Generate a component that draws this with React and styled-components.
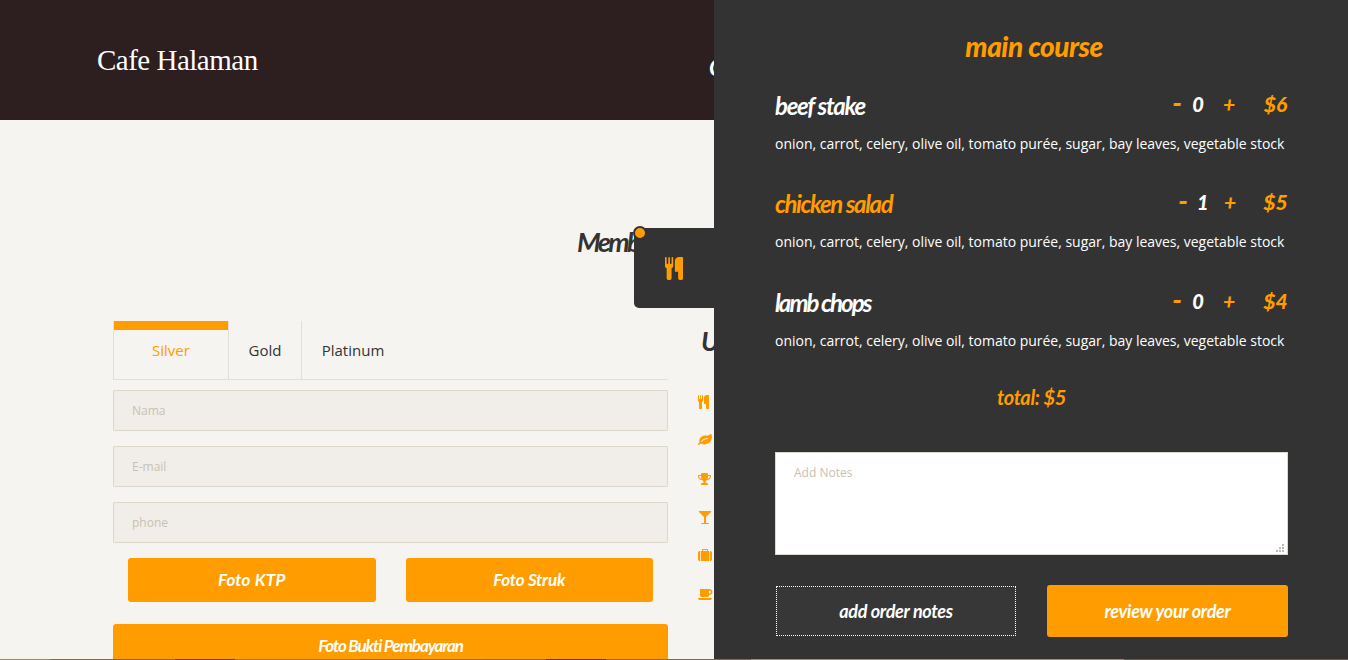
import React from "react";
import styled, { createGlobalStyle } from "styled-components";

const orange = "#ff9d00";
const charcoal = "#333333";

const GlobalStyle = createGlobalStyle`
  * { box-sizing: border-box; }
  html, body { margin: 0; padding: 0; }
  body { width: 1348px; height: 660px; overflow: hidden; font-family: "Open Sans", sans-serif; }
`;

const Page = styled.div`
  position: relative;
  width: 1348px;
  height: 660px;
  overflow: hidden;
  background: #f6f4f0;
  color: ${charcoal};
`;

const Header = styled.header`
  display: flex;
  justify-content: space-between;
  width: 739px;
  height: 120px;
  padding-left: 97px;
  background: #2d1e20;
  color: #fff;
`;

const Script = styled.span`
  display: block;
  font-family: Lato, sans-serif;
  font-style: italic;
  font-weight: ${(p) => p.$weight || 700};
  font-size: ${(p) => p.$size}px;
  letter-spacing: ${(p) => p.$spacing || 0}px;
  line-height: ${(p) => p.$line || 30}px;
  color: ${(p) => p.$color || "inherit"};
  white-space: nowrap;
`;

const Logo = styled.div`
  font-family: "Liberation Serif", serif;
  font-size: 29px;
  line-height: 36px;
  letter-spacing: -0.5px;
  padding-top: 42px;
`;

const NavItem = styled(Script)`
  width: 30px;
  padding-top: 52px;
`;

const Heading = styled.div`
  height: 201px;
  padding: 107px 0 0 577px;
`;

const Columns = styled.main`
  display: flex;
  gap: 30px;
  padding-left: 113px;
`;

const FormColumn = styled.section`
  width: 555px;
`;

const Tabs = styled.div`
  display: flex;
  height: 59px;
  margin-bottom: 10px;
  border-left: 1px solid #dfdfdf;
  border-bottom: 1px solid #dfdfdf;
`;

const Tab = styled.div`
  width: ${(p) => p.$width}px;
  border-right: ${(p) => (p.$last ? 0 : 1)}px solid #dfdfdf;
  color: ${(p) => (p.$active ? orange : charcoal)};
  font-size: 15px;
  line-height: 41px;
  text-align: center;
  &::before {
    content: "";
    display: block;
    height: 9px;
    background: ${(p) => (p.$active ? orange : "transparent")};
  }
`;

const Input = styled.input`
  display: block;
  width: 100%;
  height: 41px;
  margin: 0 0 15px;
  padding: 0 18px;
  border: 1px solid #ded7cb;
  border-radius: 1px;
  background: #f1eee9;
  font: 12px "Open Sans", sans-serif;
  &::placeholder { color: #c8c1b1; opacity: 1; }
`;

const PhotoRow = styled.div`
  display: flex;
  gap: 30px;
  padding: 0 15px;
  margin-bottom: 22px;
`;

const Button = styled.button`
  flex: 1;
  width: 100%;
  height: ${(p) => p.$height || 44}px;
  padding: 0;
  border: 0;
  border-radius: 3px;
  background: ${orange};
  color: #fff;
  display: flex;
  align-items: center;
  justify-content: center;
`;

const Perks = styled.section`
  display: flex;
  flex-direction: column;
  width: 40px;
  color: ${orange};
`;

const PerkTitle = styled(Script)`
  padding: 5px 0 0 3px;
  height: 62px;
`;

const Perk = styled.div`
  display: flex;
  align-items: center;
  height: 38.3px;
`;

const Drawer = styled.aside`
  position: absolute;
  top: 0;
  right: 0;
  width: 634px;
  height: 660px;
  padding: 27px 60px 0 61px;
  background: ${charcoal};
  color: #fff;
`;

const Handle = styled.div`
  position: absolute;
  left: -80px;
  top: 228px;
  width: 80px;
  height: 80px;
  display: flex;
  align-items: center;
  justify-content: center;
  border-radius: 5px 0 0 5px;
  background: ${charcoal};
  color: ${orange};
`;

const Badge = styled.i`
  position: absolute;
  left: -1px;
  top: -2px;
  width: 14px;
  height: 14px;
  border: 2px solid ${charcoal};
  border-radius: 50%;
  background: ${orange};
`;

const CourseTitle = styled.div`
  display: flex;
  justify-content: center;
  height: 41px;
  margin-bottom: 19px;
  padding-left: 5px;
`;

const Dish = styled.article`
  height: 76px;
  margin-bottom: 22.3px;
`;

const DishTop = styled.div`
  display: flex;
  justify-content: space-between;
  height: 38px;
`;

const Controls = styled.div`
  display: flex;
  height: 34px;
  color: ${orange};
`;

const Cell = styled(Script)`
  width: ${(p) => p.$width}px;
  margin-left: ${(p) => p.$gap || 0}px;
  text-align: center;
`;

const Description = styled.p`
  margin: 0;
  font-size: 14px;
  line-height: 38px;
  letter-spacing: -0.015px;
  white-space: nowrap;
`;

const Total = styled.div`
  display: flex;
  justify-content: center;
  height: 30px;
  margin: 1px 0 40px;
`;

const Notes = styled.div`
  display: flex;
  justify-content: space-between;
  height: 103px;
  padding: 11px 3px 2px 18px;
  border: 1px solid #ded7cb;
  background: #fff;
  color: #c8c1b1;
  font-size: 12px;
  line-height: 18px;
`;

const Grip = styled.svg`
  align-self: flex-end;
  width: 8px;
  height: 8px;
  fill: #bcbcbc;
`;

const Actions = styled.div`
  display: flex;
  gap: 30px;
  margin-top: 30px;
`;

const Outline = styled(Button)`
  margin: 1px 1px 1px;
  width: auto;
  flex: 0 0 240px;
  border: 1px dotted #fff;
  border-radius: 0;
  background: #373737;
`;

const BottomEdge = styled.div`
  position: absolute;
  left: 0;
  bottom: 0;
  display: flex;
  width: 100%;
  height: 1px;
`;

const Segment = styled.span`
  width: ${(p) => p.$width}px;
  background: ${(p) => p.$color};
`;

const icons = {
  cutlery: "M640 1472v-640q0 -61 -35.5 -111t-92.5 -70v-779q0 -52 -38 -90t-90 -38h-128q-52 0 -90 38t-38 90v779q-57 20 -92.5 70t-35.5 111v640q0 26 19 45t45 19t45 -19t19 -45v-416q0 -26 19 -45t45 -19t45 19t19 45v416q0 26 19 45t45 19t45 -19t19 -45v-416q0 -26 19 -45t45 -19t45 19t19 45v416q0 26 19 45t45 19t45 -19t19 -45zM1408 1472v-1600q0 -52 -38 -90t-90 -38h-128q-52 0 -90 38t-38 90v512h-224q-13 0 -22.5 9.5t-9.5 22.5v800q0 132 94 226t226 94h256q26 0 45 -19t19 -45z",
  leaf: "M1280 832q0 26 -19 45t-45 19q-172 0 -318 -49.5t-259.5 -134t-235.5 -219.5q-19 -21 -19 -45q0 -26 19 -45t45 -19q24 0 45 19q27 24 74 71t67 66q137 124 268.5 176t313.5 52q26 0 45 19t19 45zM1792 1030q0 -95 -20 -193q-46 -224 -184.5 -383t-357.5 -268q-214 -108 -438 -108q-148 0 -286 47q-15 5 -88 42t-96 37q-16 0 -39.5 -32t-45 -70t-52.5 -70t-60 -32q-43 0 -63.5 17.5t-45.5 59.5q-2 4 -6 11t-5.5 10t-3 9.5t-1.5 13.5q0 35 31 73.5t68 65.5t68 56t31 48q0 4 -14 38t-16 44q-9 51 -9 104q0 115 43.5 220t119 184.5t170.5 139t204 95.5q55 18 145 25.5t179.5 9t178.5 6t163.5 24t113.5 56.5l29.5 29.5t29.5 28t27 20t36.5 16t43.5 4.5q39 0 70.5 -46t47.5 -112t24 -124t8 -96z",
  trophy: "M458 653q-74 162 -74 371h-256v-96q0 -78 94.5 -162t235.5 -113zM1536 928v96h-256q0 -209 -74 -371q141 29 235.5 113t94.5 162zM1664 1056v-128q0 -71 -41.5 -143t-112 -130t-173 -97.5t-215.5 -44.5q-42 -54 -95 -95q-38 -34 -52.5 -72.5t-14.5 -89.5q0 -54 30.5 -91t97.5 -37q75 0 133.5 -45.5t58.5 -114.5v-64q0 -14 -9 -23t-23 -9h-832q-14 0 -23 9t-9 23v64q0 69 58.5 114.5t133.5 45.5q67 0 97.5 37t30.5 91q0 51 -14.5 89.5t-52.5 72.5q-53 41 -95 95q-113 5 -215.5 44.5t-173 97.5t-112 130t-41.5 143v128q0 40 28 68t68 28h288v96q0 66 47 113t113 47h576q66 0 113 -47t47 -113v-96h288q40 0 68 -28t28 -68z",
  glass: "M1699 1350q0 -35 -43 -78l-632 -632v-768h320q26 0 45 -19t19 -45t-19 -45t-45 -19h-896q-26 0 -45 19t-19 45t19 45t45 19h320v768l-632 632q-43 43 -43 78q0 23 18 36.5t38 17.5t43 4h1408q23 0 43 -4t38 -17.5t18 -36.5z",
  suitcase: "M640 1152h512v128h-512v-128zM288 1152v-1280h-64q-92 0 -158 66t-66 158v832q0 92 66 158t158 66h64zM1408 1152v-1280h-1024v1280h128v160q0 40 28 68t68 28h576q40 0 68 -28t28 -68v-160h128zM1792 928v-832q0 -92 -66 -158t-158 -66h-64v1280h64q92 0 158 -66t66 -158z",
  coffee: "M1664 896q0 80 -56 136t-136 56h-64v-384h64q80 0 136 56t56 136zM0 128h1792q0 -106 -75 -181t-181 -75h-1280q-106 0 -181 75t-75 181zM1856 896q0 -159 -112.5 -271.5t-271.5 -112.5h-64v-32q0 -92 -66 -158t-158 -66h-704q-92 0 -158 66t-66 158v736q0 26 19 45t45 19h1152q159 0 271.5 -112.5t112.5 -271.5z",
};

const Glyph = ({ name, size = 14, span = 1792 }) => (
  <svg width={(size * span) / 1792} height={size} viewBox={`0 -1536 ${span} 1792`} fill="currentColor">
    <path transform="scale(1,-1)" d={icons[name]} />
  </svg>
);

const dishes = [
  { name: "beef stake", qty: 0, price: "$6", spacing: -1.3 },
  { name: "chicken salad", qty: 1, price: "$5", spacing: -1.4, chosen: true },
  { name: "lamb chops", qty: 0, price: "$4", spacing: -1.9 },
];

const edge = [
  [51, "#a5845a"], [62, "#8f6840"], [62, "#8c5f28"], [60, "#6b420f"], [125, "#a8701a"],
  [62, "#8f6420"], [62, "#9b6a1c"], [62, "#98661a"], [60, "#663808"], [145, "#8d6a35"],
  [373, "#a08f6c"], [224, "#655a49"],
];

export default function App() {
  return (
    <Page>
      <GlobalStyle />
      <Header>
        <Logo>Cafe Halaman</Logo>
        <NavItem $size={23}>C</NavItem>
      </Header>
      <Heading>
        <Script $size={27} $spacing={-2.6}>Memb</Script>
      </Heading>
      <Columns>
        <FormColumn>
          <Tabs>
            <Tab $active $width={115}>Silver</Tab>
            <Tab $width={73}>Gold</Tab>
            <Tab $width={102} $last>Platinum</Tab>
          </Tabs>
          <Input placeholder="Nama" />
          <Input placeholder="E-mail" />
          <Input placeholder="phone" />
          <PhotoRow>
            <Button><Script $size={17} $spacing={0.2}>Foto KTP</Script></Button>
            <Button><Script $size={17} $spacing={-0.2}>Foto Struk</Script></Button>
          </PhotoRow>
          <Button><Script $size={17} $spacing={-1.1}>Foto Bukti Pembayaran</Script></Button>
        </FormColumn>
        <Perks>
          <PerkTitle $size={27} $color={charcoal}>U</PerkTitle>
          {Object.keys(icons).map((name) => (
            <Perk key={name}><Glyph name={name} span={name === "coffee" ? 1920 : 1792} /></Perk>
          ))}
        </Perks>
      </Columns>
      <Drawer>
        <Handle>
          <Badge />
          <Glyph name="cutlery" size={23} span={1408} />
        </Handle>
        <CourseTitle>
          <Script $size={28} $line={38} $weight={900} $spacing={-0.5} $color={orange}>main course</Script>
        </CourseTitle>
        {dishes.map((d) => (
          <Dish key={d.name}>
            <DishTop>
              <Script $size={24} $line={38} $spacing={d.spacing} $color={d.chosen ? orange : "#fff"}>{d.name}</Script>
              <Controls>
                <Cell $size={28} $line={30} $weight={900} $width={10}>-</Cell>
                <Cell $size={20} $line={34} $weight={900} $width={d.qty ? 9 : 12} $gap={d.qty ? 9 : 10} $color="#fff">{d.qty}</Cell>
                <Cell $size={21} $line={33} $weight={900} $width={12} $gap={d.qty ? 18 : 19}>+</Cell>
                <Cell $size={21} $line={33} $weight={900} $width={25} $gap={d.qty ? 27 : 28}>{d.price}</Cell>
              </Controls>
            </DishTop>
            <Description>onion, carrot, celery, olive oil, tomato purée, sugar, bay leaves, vegetable stock</Description>
          </Dish>
        ))}
        <Total><Script $size={20} $color={orange} $spacing={-0.4}>total: $5</Script></Total>
        <Notes>
          Add Notes
          <Grip viewBox="0 0 8 8">
            <path d="M6 0h2v2h-2zM3 3h2v2h-2zM6 3h2v2h-2zM0 6h2v2h-2zM3 6h2v2h-2zM6 6h2v2h-2z" />
          </Grip>
        </Notes>
        <Actions>
          <Outline $height={50}><Script $size={18} $spacing={-0.3}>add order notes</Script></Outline>
          <Button $height={52}><Script $size={18} $spacing={-0.3}>review your order</Script></Button>
        </Actions>
      </Drawer>
      <BottomEdge>
        {edge.map(([width, color], i) => <Segment key={i} $width={width} $color={color} />)}
      </BottomEdge>
    </Page>
  );
}
